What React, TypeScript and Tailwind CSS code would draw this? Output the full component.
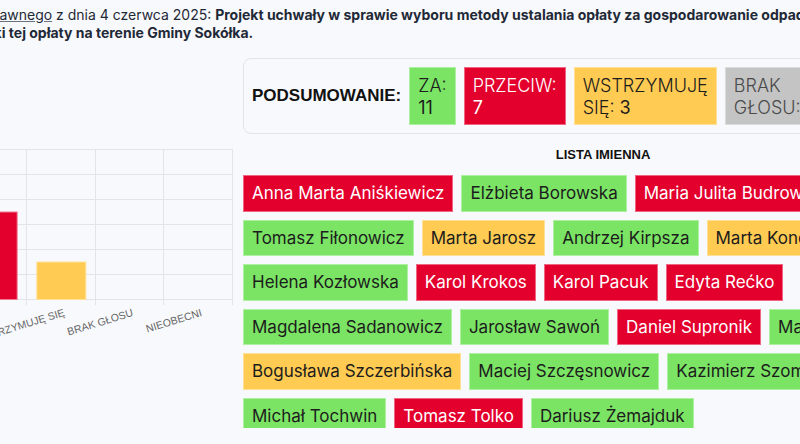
const summary = [
  { label: "ZA:", count: "11", keep: false, tone: "bg-[#7be465] text-[#1c1c1c]" },
  { label: "PRZECIW:", count: "7", keep: false, tone: "bg-[#e3002d] text-white" },
  { label: "WSTRZYMUJĘ SIĘ:", count: "3", keep: false, tone: "bg-[#ffcb53] text-[#1c1c1c]" },
  { label: "BRAK GŁOSU:", count: "0", keep: true, tone: "bg-[#c4c4c4] text-[#4a4a4a]" },
  { label: "NIEOBECNI:", count: "0", keep: true, tone: "bg-[#c4c4c4] text-[#4a4a4a]" },
];

type Vote = "za" | "przeciw" | "wstrzymal";

const voteTone: Record<Vote, string> = {
  za: "bg-[#7be465] text-[#1c1c1c]",
  przeciw: "bg-[#e3002d] text-white",
  wstrzymal: "bg-[#ffcb53] text-[#1c1c1c]",
};

const councillors: { name: string; vote: Vote }[] = [
  { name: "Anna Marta Aniśkiewicz", vote: "przeciw" },
  { name: "Elżbieta Borowska", vote: "za" },
  { name: "Maria Julita Budrowska", vote: "przeciw" },
  { name: "Tomasz Fiłonowicz", vote: "za" },
  { name: "Marta Jarosz", vote: "wstrzymal" },
  { name: "Andrzej Kirpsza", vote: "za" },
  { name: "Marta Kondracka", vote: "wstrzymal" },
  { name: "Helena Kozłowska", vote: "za" },
  { name: "Karol Krokos", vote: "przeciw" },
  { name: "Karol Pacuk", vote: "przeciw" },
  { name: "Edyta Rećko", vote: "przeciw" },
  { name: "Magdalena Sadanowicz", vote: "za" },
  { name: "Jarosław Sawoń", vote: "za" },
  { name: "Daniel Supronik", vote: "przeciw" },
  { name: "Mateusz Szarejko", vote: "za" },
  { name: "Bogusława Szczerbińska", vote: "wstrzymal" },
  { name: "Maciej Szczęsnowicz", vote: "za" },
  { name: "Kazimierz Szomko", vote: "za" },
  { name: "Michał Tochwin", vote: "za" },
  { name: "Tomasz Tolko", vote: "przeciw" },
  { name: "Dariusz Żemajduk", vote: "za" },
];

// bar chart: 12 votes max, 12.5px per vote, categories 68.67px wide
const bars = [
  { label: "ZA", value: 11, fill: "#7be465", stroke: "#b4f0a6" },
  { label: "PRZECIW", value: 7, fill: "#e3002d", stroke: "#f07a92" },
  { label: "WSTRZYMUJĘ SIĘ", value: 3, fill: "#ffcb53", stroke: "#ffe19a" },
  { label: "BRAK GŁOSU", value: 0, fill: "#c4c4c4", stroke: "#dddddd" },
  { label: "NIEOBECNI", value: 0, fill: "#c4c4c4", stroke: "#dddddd" },
];

function VoteChart() {
  const step = 68.67;
  const left = 233 - step * 5;
  const base = 299;
  return (
    <svg width={233} height={282} viewBox="0 58 233 282" className="block">
      {[149, 174, 199, 224, 249, 274, 299].map((y) => (
        <line key={y} x1={-300} x2={233} y1={y + 0.5} y2={y + 0.5} stroke="#e3e4e8" />
      ))}
      {[0, 1, 2, 3, 4, 5].map((i) => {
        const x = Math.round(left + step * i) - 0.5;
        return <line key={i} x1={x} x2={x} y1={149} y2={305} stroke="#e3e4e8" />;
      })}
      {bars.map((b, i) => {
        const cx = left + step * i + step / 2;
        const h = b.value * 12.5;
        return (
          <g key={b.label}>
            {h > 0 && (
              <rect x={cx - 24.5} y={base - h + 0.5} width={49} height={h} fill={b.fill} stroke={b.stroke} />
            )}
            <text
              x={cx + 1.5}
              y={308}
              textAnchor="end"
              dominantBaseline="hanging"
              transform={`rotate(-17 ${cx + 1.5} 308)`}
              fontFamily="'Liberation Sans', Arial, sans-serif"
              fontSize={10.5}
              fill="#666"
            >
              {b.label}
            </text>
          </g>
        );
      })}
    </svg>
  );
}

export default function App() {
  return (
    <div className="h-[444px] w-[800px] overflow-hidden bg-[#f8f9fc] font-['Inter',sans-serif] text-[#1f2937]">
      <p className="-ml-[131px] whitespace-nowrap pt-[6px] text-[14px] leading-[18px]">
        <span className="block">
          Wyniki <a className="underline decoration-[#6b7280]">głosowania jawnego</a> z dnia 4 czerwca 2025:{" "}
          <b>Projekt uchwały w sprawie wyboru metody ustalania opłaty za gospodarowanie odpadami komunalnymi</b>
        </span>
        <span className="-ml-[8px] block font-bold">oraz ustalenia stawki tej opłaty na terenie Gminy Sokółka.</span>
      </p>

      <div className="mt-4 flex gap-[10px]">
        <div className="w-[233px] shrink-0">
          <VoteChart />
        </div>

        <div className="w-[720px] shrink-0">
          <div className="flex items-center gap-2 rounded-lg border border-[#e2e4ea] p-2">
            <span className="font-['Liberation_Sans',Arial,sans-serif] text-[17px] font-bold text-[#111]">
              PODSUMOWANIE:
            </span>
            {summary.map((s) => (
              <div
                key={s.label}
                className={`w-min border border-white/40 px-2 pt-[7px] pb-[5px] text-[18px] leading-[22px] font-light ${s.tone}`}
              >
                {s.label}
                {s.keep ? "\u00a0" : " "}
                <span className="font-normal">{s.count}</span>
              </div>
            ))}
          </div>

          <h3 className="mt-[13px] text-center font-['Liberation_Sans',Arial,sans-serif] text-[13px] leading-[15px] font-bold text-[#111]">
            LISTA IMIENNA
          </h3>

          <div className="mt-[13px] flex h-[253px] flex-wrap content-start gap-2 overflow-hidden">
            {councillors.map((c) => (
              <div
                key={c.name}
                className={`border border-white/40 px-2 py-1 text-[17px] leading-[26.5px] ${voteTone[c.vote]}`}
              >
                {c.name}
              </div>
            ))}
          </div>
        </div>
      </div>
    </div>
  );
}
